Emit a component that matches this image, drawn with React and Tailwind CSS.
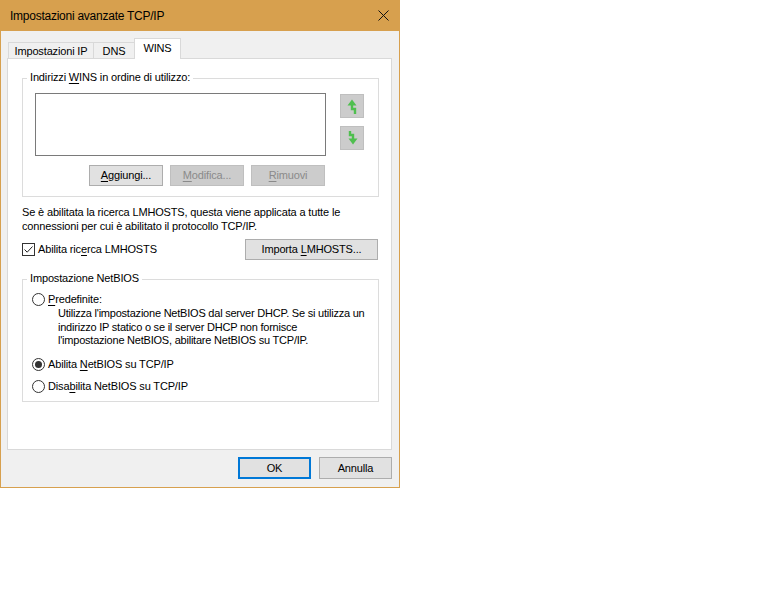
import React from 'react'

const U = ({ children }) => <span className="underline underline-offset-[2px] decoration-1">{children}</span>

function Btn({ children, disabled, primary, className = '' }) {
  const look = disabled
    ? 'border border-[#bfbfbf] bg-[#cccccc] text-[#8a8a8a]'
    : primary
      ? 'border-2 border-[#0078d7] bg-[#e1e1e1] text-black'
      : 'border border-[#adadad] bg-[#e1e1e1] text-black'
  return (
    <div className={`flex items-center justify-center ${look} ${className}`}>
      <span className="whitespace-pre">{children}</span>
    </div>
  )
}

function ArrowBtn({ up }) {
  return (
    <div className="flex h-[24px] w-[24px] items-center justify-center border border-[#bfbfbf] bg-[#cccccc]">
      <svg width="22" height="22" viewBox="0 0 22 22">
        {up ? (
          <>
            <polyline points="11,10 11,14 14,14 14,19" fill="none" stroke="#4fbf4f" strokeWidth="2.4" />
            <path d="M11 4.5 L15.5 10.5 L6.5 10.5 Z" fill="#4fbf4f" />
          </>
        ) : (
          <>
            <polyline points="9,4 9,8 12,8 12,12" fill="none" stroke="#4fbf4f" strokeWidth="2.4" />
            <path d="M12 17.5 L7.5 11.5 L16.5 11.5 Z" fill="#4fbf4f" />
          </>
        )}
      </svg>
    </div>
  )
}

function Radio({ checked }) {
  return (
    <div className="flex h-[13px] w-[13px] items-center justify-center rounded-full border border-[#333333] bg-white">
      {checked && <div className="h-[7px] w-[7px] rounded-full bg-[#333333]" />}
    </div>
  )
}

function GroupBox({ label, className = '', children }) {
  return (
    <div className={`relative border border-[#dcdcdc] ${className}`}>
      <div className="absolute left-[4px] top-[-8px] bg-white px-[3px] leading-[13px]">{label}</div>
      {children}
    </div>
  )
}

export default function App() {
  return (
    <div className="h-[488px] w-[400px] bg-[#f0f0f0] border-x border-b border-[#d7a04e] font-['Liberation_Sans',Arial,sans-serif] text-[11px] tracking-[-0.15px] text-black flex flex-col">
      {/* title bar */}
      <div className="flex h-[31px] shrink-0 items-center justify-between bg-[#d7a04e] pl-[9px] pr-[10px]">
        <span className="text-[12px] tracking-[-0.25px] pt-[1px]">Impostazioni avanzate TCP/IP</span>
        <svg width="11" height="11" viewBox="0 0 11 11">
          <path d="M0.5 0.5 L10.5 10.5 M10.5 0.5 L0.5 10.5" stroke="#111" strokeWidth="1" />
        </svg>
      </div>

      {/* tabs */}
      <div className="mt-[7px] flex h-[21px] items-start pl-[7px]">
        <div className="mt-[4px] flex h-[16px] w-[85px] items-center justify-center border-l border-t border-[#d9d9d9] bg-[#f0f0f0] pt-[1px]">
          Impostazioni IP
        </div>
        <div className="mt-[4px] flex h-[16px] w-[41px] items-center justify-center border-l border-t border-[#d9d9d9] bg-[#f0f0f0] pt-[1px]">
          DNS
        </div>
        <div className="relative z-10 flex h-[21px] w-[47px] items-center justify-center border-x border-t border-[#d9d9d9] bg-white pb-[2px]">
          WINS
        </div>
      </div>

      {/* tab page */}
      <div className="-mt-px ml-[6px] h-[392px] w-[385px] border border-[#d9d9d9] bg-white">
        <GroupBox
          className="ml-[14px] mt-[19px] h-[119px] w-[357px]"
          label={<>Indirizzi <U>W</U>INS in ordine di utilizzo:</>}
        >
          <div className="flex pl-[12px] pt-[14px]">
            <div className="h-[63px] w-[291px] border border-[#7a7a7a] bg-white" />
            <div className="ml-[14px] mt-px flex flex-col gap-[8px]">
              <ArrowBtn up />
              <ArrowBtn />
            </div>
          </div>
          <div className="mt-[9px] flex gap-[7px] pl-[66px]">
            <Btn className="h-[21px] w-[74px]"><U>A</U>ggiungi...</Btn>
            <Btn disabled className="h-[21px] w-[74px]"><U>M</U>odifica...</Btn>
            <Btn disabled className="h-[21px] w-[74px]"><U>R</U>imuovi</Btn>
          </div>
        </GroupBox>

        <p className="ml-[14px] mt-[8px] whitespace-nowrap leading-[14px]">
          Se è abilitata la ricerca LMHOSTS, questa viene applicata a tutte le
          <br />
          connessioni per cui è abilitato il protocollo TCP/IP.
        </p>

        <div className="ml-[14px] mt-[6px] flex h-[21px] w-[356px] items-center">
          <div className="flex h-[13px] w-[13px] items-center justify-center border border-[#333333] bg-white">
            <svg width="11" height="11" viewBox="0 0 11 11">
              <path d="M1.5 5.5 L4.2 8.2 L9.5 2.5" fill="none" stroke="#222" strokeWidth="1" />
            </svg>
          </div>
          <span className="ml-[3px]">Abilita ric<U>e</U>rca LMHOSTS</span>
          <Btn className="ml-auto h-[21px] w-[133px]">Importa <U>L</U>MHOSTS...</Btn>
        </div>

        <GroupBox
          className="ml-[14px] mt-[19px] h-[123px] w-[357px]"
          label="Impostazione NetBIOS"
        >
          <div className="mt-[12px] flex h-[14px] items-center pl-[9px]">
            <Radio />
            <span className="ml-[3px]"><U>P</U>redefinite:</span>
          </div>
          <p className="ml-[35px] mt-px whitespace-nowrap leading-[13.5px] tracking-[-0.22px]">
            Utilizza l'impostazione NetBIOS dal server DHCP. Se si utilizza un
            <br />
            indirizzo IP statico o se il server DHCP non fornisce
            <br />
            l'impostazione NetBIOS, abilitare NetBIOS su TCP/IP.
          </p>
          <div className="mt-[10px] flex h-[14px] items-center pl-[9px]">
            <Radio checked />
            <span className="ml-[3px]">Abilita <U>N</U>etBIOS su TCP/IP</span>
          </div>
          <div className="mt-[8px] flex h-[14px] items-center pl-[9px]">
            <Radio />
            <span className="ml-[3px]">Disa<U>b</U>ilita NetBIOS su TCP/IP</span>
          </div>
        </GroupBox>
      </div>

      {/* dialog buttons */}
      <div className="mt-[7px] flex justify-end gap-[8px] pr-[7px]">
        <Btn primary className="h-[22px] w-[73px]">OK</Btn>
        <Btn className="h-[22px] w-[73px]">Annulla</Btn>
      </div>
    </div>
  )
}
